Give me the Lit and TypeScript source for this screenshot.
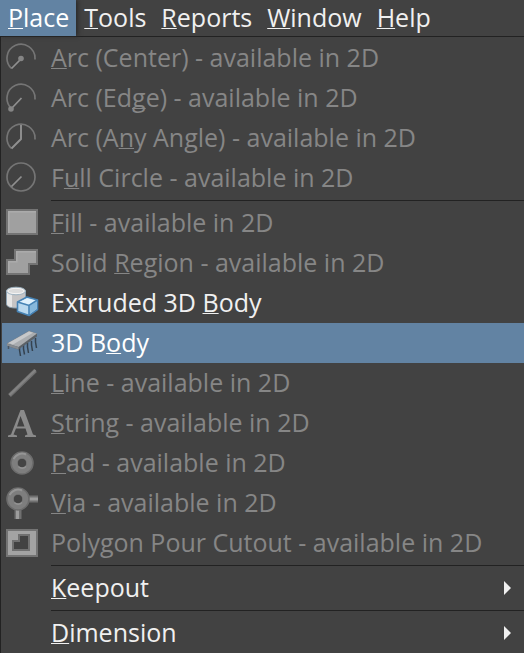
import { LitElement, html, css, svg, nothing } from "lit";
import { customElement, property, state } from "lit/decorators.js";
import { classMap } from "lit/directives/class-map.js";

const icons: Record<string, unknown> = {
  arcCenter: svg`
    <path d="M6.500 27.500A14 14 0 1 1 30 17.500V18.500" fill="none" stroke="#757575" stroke-width="1.7"/>
    <path d="M6.500 27.500L16 18" stroke="#909090" stroke-width="1.7"/>
    <circle cx="16" cy="17.500" r="2.8" fill="#858585"/>`,
  arcEdge: svg`
    <path d="M6.500 27.500A14 14 0 1 1 30 17.500V18.500" fill="none" stroke="#757575" stroke-width="1.7"/>
    <path d="M6 28L16.500 17" stroke="#909090" stroke-width="1.7"/>
    <circle cx="6" cy="28" r="2.8" fill="#858585"/>`,
  arcAny: svg`
    <path d="M6.500 27.500A14 14 0 1 1 30 17.500V18.500" fill="none" stroke="#757575" stroke-width="1.7"/>
    <path d="M16 4V18L6.500 27.500" fill="none" stroke="#909090" stroke-width="1.9"/>`,
  circle: svg`
    <circle cx="16" cy="16" r="14" fill="none" stroke="#757575" stroke-width="1.7"/>
    <path d="M6.500 25.500L16.500 15.500" stroke="#909090" stroke-width="1.7"/>`,
  fill: svg`
    <path d="M1 3H33V29H1Z" fill="#747474"/>
    <path d="M3 5H31V27H3Z" fill="#a0a0a0"/>
    <path d="M3 27V5H31V6.500H4.500V27Z" fill="#ababab"/>`,
  region: svg`
    <path d="M9 3H33V19H25V29H1V13H9Z" fill="#747474"/>
    <path d="M11 5H31V17H23V27H3V15H11Z" fill="#a0a0a0"/>
    <path d="M11 14V5H31V6.500H12.500V16.500H4.500V27H3V15H11Z" fill="#ababab"/>`,
  extruded: svg`
    <path d="M1.500 5V18C1.500 20.500 5 22 11 22S20.500 20.500 20.500 18V5Z" fill="#c6c4c4" stroke="#8ba0b0"/>
    <path d="M2 6L7 8V21C4 21 2 19.500 2 18Z" fill="#e6e6e6"/>
    <ellipse cx="11" cy="5" rx="9.500" ry="3.800" fill="#dcdcdc" stroke="#9db2c1"/>
    <ellipse cx="11" cy="5" rx="8" ry="2.600" fill="none" stroke="#f4f4f4"/>
    <path d="M12.500 16L22 11L32.500 14V23.500L24 29.500L12.500 25.500Z" fill="#b9d8ee" stroke="#4683b5" stroke-width="1.600" stroke-linejoin="round"/>
    <path d="M14.500 16L22 12.200L30.500 14.500L24 18.500Z" fill="#e0f1fc"/>
    <path d="M24.500 20L31.700 15.500V23L24.500 28.300Z" fill="#86b8dc"/>
    <path d="M12.500 16L24 19.500L32.500 14M24 19.500V29" fill="none" stroke="#4683b5" stroke-width="1.600"/>`,
  chip: svg`
    <path d="M14.500 20V24L15.500 30M18.500 19V23L19.500 28.500M22.500 17V21L23.500 27M26.500 15V19L27.500 25M30.500 12V16L31.500 22" fill="none" stroke="#35424f" stroke-width="1.500"/>
    <path d="M2 17.500L24 5L32 7.500V10.500L13.500 23.500L2 20Z" fill="#5b6167"/>
    <path d="M2 17.500L24 5L32 7.500L13.500 21Z" fill="#a9acaf"/>
    <path d="M3.500 17L24 5.500L28 6.800L8 18.500Z" fill="#c6c8ca"/>
    <path d="M2 17.500L13.500 21V23.500L2 20Z" fill="#868b90"/>
    <path d="M3.500 20V23" stroke="#4a5765" stroke-width="1.500"/>`,
  line: svg`
    <path d="M4.500 29.500L30.500 4.500" stroke="#707070" stroke-width="4"/>
    <path d="M4.500 29L30.500 4" stroke="#838383" stroke-width="2.200"/>`,
  string: svg`
    <path d="M3 31V29.500L6 28.500L15.500 4H19L28 28.500L31 29.500V31H20V29.500L22.500 28.500L20.500 22.500H11L8.500 28.500L12 29.500V31H3ZM12 20.500H19.500L15.500 10Z" fill="#8a8a8a" fill-rule="evenodd"/>`,
  pad: svg`
    <circle cx="17" cy="17" r="7.800" fill="none" stroke="#6c6c6c" stroke-width="8"/>
    <circle cx="17" cy="17" r="7.500" fill="none" stroke="#7e7e7e" stroke-width="5.500"/>
    <path d="M8.500 13A9.500 9.500 0 0 1 21 8.500" fill="none" stroke="#969696" stroke-width="2"/>
    <path d="M13.500 20.500A5 5 0 0 0 21 20.500" fill="none" stroke="#929292" stroke-width="1.600"/>
    <circle cx="17" cy="17" r="4" fill="#444"/>`,
  via: svg`
    <path d="M23 13H33M13 23V33" stroke="#707070" stroke-width="7"/>
    <path d="M23 13H33M12.500 23V33" stroke="#9c9c9c" stroke-width="3"/>
    <circle cx="13" cy="13" r="7.800" fill="none" stroke="#6c6c6c" stroke-width="8"/>
    <circle cx="13" cy="13" r="7.500" fill="none" stroke="#7e7e7e" stroke-width="5.500"/>
    <path d="M4.500 9A9.500 9.500 0 0 1 17 4.500" fill="none" stroke="#969696" stroke-width="2"/>
    <path d="M9.500 16.500A5 5 0 0 0 17 16.500" fill="none" stroke="#929292" stroke-width="1.600"/>
    <circle cx="13" cy="13" r="4" fill="#444"/>`,
  cutout: svg`
    <path d="M1 3H33V31H1Z" fill="#747474"/>
    <path d="M3 5H31V29H3Z" fill="#a3a3a3"/>
    <path d="M13 8H25V25H7V14H13Z" fill="#707070"/>
    <path d="M15 10H23V23H9V16H15Z" fill="#424242"/>`,
};

interface Entry {
  label: string;
  icon?: string;
  disabled?: boolean;
  submenu?: boolean;
}

const suffix = " - available in 2D";

/* An ampersand stands before each access key; a rule separates the groups. */
const groups: Entry[][] = [
  [
    { label: "&Arc (Center)" + suffix, icon: "arcCenter", disabled: true },
    { label: "Arc (Ed&ge)" + suffix, icon: "arcEdge", disabled: true },
    { label: "Arc (A&ny Angle)" + suffix, icon: "arcAny", disabled: true },
    { label: "F&ull Circle" + suffix, icon: "circle", disabled: true },
  ],
  [
    { label: "&Fill" + suffix, icon: "fill", disabled: true },
    { label: "Solid &Region" + suffix, icon: "region", disabled: true },
    { label: "Extruded 3D &Body", icon: "extruded" },
    { label: "3D B&ody", icon: "chip" },
    { label: "&Line" + suffix, icon: "line", disabled: true },
    { label: "&String" + suffix, icon: "string", disabled: true },
    { label: "&Pad" + suffix, icon: "pad", disabled: true },
    { label: "&Via" + suffix, icon: "via", disabled: true },
    { label: "Polygon Pour Cutout" + suffix, icon: "cutout", disabled: true },
  ],
  [{ label: "&Keepout", submenu: true }],
  [{ label: "&Dimension", submenu: true }],
];

const textStyles = css`
  button {
    font: inherit;
    color: inherit;
    background: none;
    border: 0;
    margin: 0;
    text-align: left;
    white-space: pre;
  }
  .key {
    text-decoration: underline;
    text-decoration-thickness: 1px;
    text-underline-offset: 1px;
    text-decoration-skip-ink: none;
  }
`;

function withKey(label: string) {
  const at = label.indexOf("&");
  if (at < 0) return html`${label}`;
  return html`${label.slice(0, at)}<span class="key">${label[at + 1]}</span>${label.slice(at + 2)}`;
}

@customElement("menu-entry")
export class MenuEntry extends LitElement {
  @property({ attribute: false }) entry!: Entry;
  @property({ type: Boolean }) active = false;

  static styles = [
    textStyles,
    css`
      :host {
        display: block;
      }
      .row {
        display: grid;
        grid-template-columns: 46px 1fr auto;
        align-items: center;
        width: 100%;
        height: 40px;
        padding: 0 12px 0 3px;
        color: #f0f0f0;
      }
      .row:disabled {
        color: #868686;
      }
      .row.active {
        background: #6283a3;
        color: #fff;
      }
      .icon {
        width: 34px;
        height: 34px;
        display: block;
      }
      .label {
        padding-bottom: 2px;
      }
      .arrow {
        width: 8px;
        height: 14px;
        fill: #f0f0f0;
      }
    `,
  ];

  render() {
    const { label, icon, disabled, submenu } = this.entry;
    return html`<button
      class=${classMap({ row: true, active: this.active })}
      role="menuitem"
      ?disabled=${disabled}
      aria-haspopup=${submenu ? "menu" : nothing}
    >
      <svg class="icon" viewBox="0 0 34 34" aria-hidden="true">${icon ? icons[icon] : nothing}</svg
      ><span class="label">${withKey(label)}</span>${submenu
        ? html`<svg class="arrow" viewBox="0 0 8 14" aria-hidden="true"><path d="M0 0L7 7L0 14Z" /></svg>`
        : nothing}
    </button>`;
  }
}

@customElement("app-root")
export class AppRoot extends LitElement {
  @state() private open = "&Place";
  @state() private current = "3D B&ody";

  static styles = [
    textStyles,
    css`
      :host {
        display: block;
        min-height: 100vh;
        background: #424242;
        color: #f0f0f0;
        font: 25px/34px "Open Sans", "Noto Sans", sans-serif;
        overflow: hidden;
      }
      .bar {
        display: flex;
        height: 36px;
      }
      .tab {
        padding: 0 7px 2px 8px;
      }
      .open {
        background: #6283a3;
        color: #fff;
        box-shadow: 2px 0 4px #2a2a2a;
      }
      .menu {
        border: solid #222;
        border-width: 1px 0 0 1px;
        padding: 1px 0 0 1px;
      }
      .rule {
        border: 0;
        border-top: 1px solid #222;
        margin: 2px 0 2px 49px;
      }
    `,
  ];

  render() {
    return html`
      <nav class="bar" role="menubar">
        ${["&Place", "&Tools", "&Reports", "&Window", "&Help"].map(
          (name) => html`<button
            class=${classMap({ tab: true, open: name === this.open })}
            role="menuitem"
            @click=${() => (this.open = name)}
          >${withKey(name)}</button>`
        )}
      </nav>
      <div class="menu" role="menu">
        ${groups.map(
          (group, i) => html`${i ? html`<hr class="rule" />` : nothing}${group.map(
            (entry) => html`<menu-entry
              .entry=${entry}
              .active=${entry.label === this.current}
              @mouseenter=${() => {
                if (!entry.disabled) this.current = entry.label;
              }}
            ></menu-entry>`
          )}`
        )}
      </div>
    `;
  }
}
